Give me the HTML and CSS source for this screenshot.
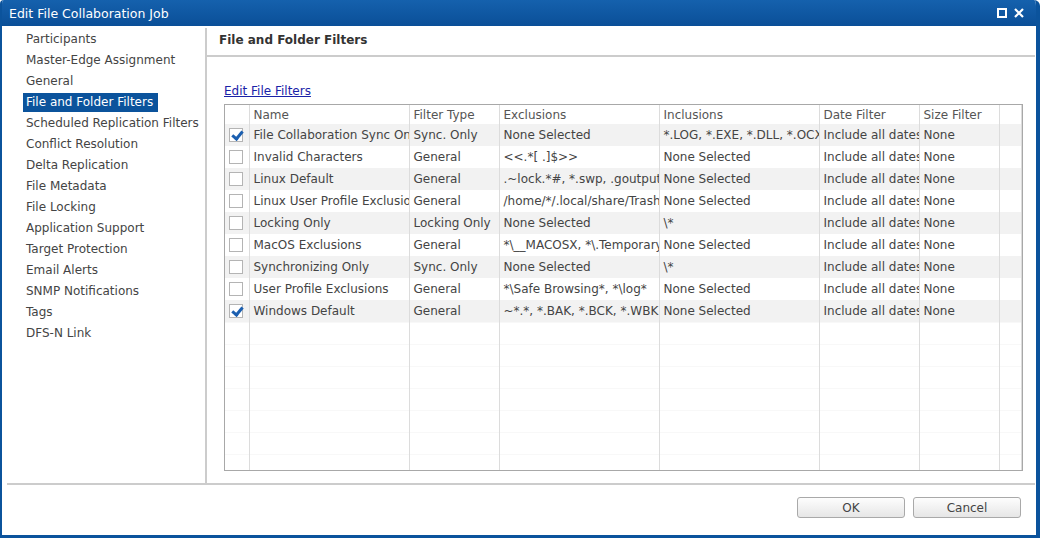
FILE: index.html
```html
<!DOCTYPE html>
<html lang="en">
<head>
    <meta charset="UTF-8">
    <title>Edit File Collaboration Job</title>
    <link rel="stylesheet" href="styles.css">
</head>
<body>
    <div class="dialog">
        <div class="titlebar">
            <span class="title">Edit File Collaboration Job</span>
            <span class="tools">
                <svg width="10" height="10" viewBox="0 0 10 10"><rect x="1" y="1" width="8" height="8" fill="none" stroke="#fff" stroke-width="2"/></svg>
                <svg width="10" height="10" viewBox="0 0 10 10"><path d="M1 1 L9 9 M9 1 L1 9" stroke="#fff" stroke-width="2.2"/></svg>
            </span>
        </div>
        <div class="main">
            <ul class="nav">
                <li>Participants</li>
                <li>Master-Edge Assignment</li>
                <li>General</li>
                <li class="active"><span>File and Folder Filters</span></li>
                <li>Scheduled Replication Filters</li>
                <li>Conflict Resolution</li>
                <li>Delta Replication</li>
                <li>File Metadata</li>
                <li>File Locking</li>
                <li>Application Support</li>
                <li>Target Protection</li>
                <li>Email Alerts</li>
                <li>SNMP Notifications</li>
                <li>Tags</li>
                <li>DFS-N Link</li>
            </ul>
            <div class="panel">
                <div class="panel-head">File and Folder Filters</div>
                <div class="panel-body">
                    <a class="edit-link" href="#">Edit File Filters</a>
                    <div class="grid">
                        <table>
                            <colgroup>
                                <col style="width:24px"><col style="width:160px"><col style="width:90px"><col style="width:160px"><col style="width:160px"><col style="width:100px"><col style="width:80px"><col>
                            </colgroup>
                            <thead>
                                <tr><th></th><th>Name</th><th>Filter Type</th><th>Exclusions</th><th>Inclusions</th><th>Date Filter</th><th>Size Filter</th><th></th></tr>
                            </thead>
                            <tbody>
                                <tr><td><span class="cb on"></span></td><td>File Collaboration Sync Only</td><td>Sync. Only</td><td>None Selected</td><td>*.LOG, *.EXE, *.DLL, *.OCX</td><td>Include all dates</td><td>None</td><td></td></tr>
                                <tr><td><span class="cb"></span></td><td>Invalid Characters</td><td>General</td><td>&lt;&lt;.*[ .]$&gt;&gt;</td><td>None Selected</td><td>Include all dates</td><td>None</td><td></td></tr>
                                <tr><td><span class="cb"></span></td><td>Linux Default</td><td>General</td><td>.~lock.*#, *.swp, .goutputstream</td><td>None Selected</td><td>Include all dates</td><td>None</td><td></td></tr>
                                <tr><td><span class="cb"></span></td><td>Linux User Profile Exclusions</td><td>General</td><td>/home/*/.local/share/Trash</td><td>None Selected</td><td>Include all dates</td><td>None</td><td></td></tr>
                                <tr><td><span class="cb"></span></td><td>Locking Only</td><td>Locking Only</td><td>None Selected</td><td>\*</td><td>Include all dates</td><td>None</td><td></td></tr>
                                <tr><td><span class="cb"></span></td><td>MacOS Exclusions</td><td>General</td><td>*\__MACOSX, *\.Temporary</td><td>None Selected</td><td>Include all dates</td><td>None</td><td></td></tr>
                                <tr><td><span class="cb"></span></td><td>Synchronizing Only</td><td>Sync. Only</td><td>None Selected</td><td>\*</td><td>Include all dates</td><td>None</td><td></td></tr>
                                <tr><td><span class="cb"></span></td><td>User Profile Exclusions</td><td>General</td><td>*\Safe Browsing*, *\log*</td><td>None Selected</td><td>Include all dates</td><td>None</td><td></td></tr>
                                <tr><td><span class="cb on"></span></td><td>Windows Default</td><td>General</td><td>~*.*, *.BAK, *.BCK, *.WBK</td><td>None Selected</td><td>Include all dates</td><td>None</td><td></td></tr>
                                <tr class="empty"><td></td><td></td><td></td><td></td><td></td><td></td><td></td><td></td></tr>
                                <tr class="empty"><td></td><td></td><td></td><td></td><td></td><td></td><td></td><td></td></tr>
                                <tr class="empty"><td></td><td></td><td></td><td></td><td></td><td></td><td></td><td></td></tr>
                                <tr class="empty"><td></td><td></td><td></td><td></td><td></td><td></td><td></td><td></td></tr>
                                <tr class="empty"><td></td><td></td><td></td><td></td><td></td><td></td><td></td><td></td></tr>
                                <tr class="empty"><td></td><td></td><td></td><td></td><td></td><td></td><td></td><td></td></tr>
                                <tr class="empty"><td></td><td></td><td></td><td></td><td></td><td></td><td></td><td></td></tr>
                            </tbody>
                        </table>
                    </div>
                </div>
            </div>
        </div>
        <div class="footer">
            <button class="btn">OK</button>
            <button class="btn">Cancel</button>
        </div>
    </div>
</body>
</html>
```

FILE: styles.css
```css
*{
    box-sizing: border-box;
}
body{
    margin: 0;
    font-family: "DejaVu Sans", Verdana, sans-serif;
    font-size: 12px;
    color: #444;
}
.dialog{
    width: 1040px;
    height: 538px;
    background: #fff;
    border: solid #0b539c;
    border-width: 0 4px 3px 2px;
    border-radius: 4px 6px 0 0;
    display: flex;
    flex-direction: column;
    overflow: hidden;
}
.titlebar{
    height: 26px;
    background: linear-gradient(#1561ad, #0a4f98);
    color: #fff;
    display: flex;
    align-items: center;
    justify-content: space-between;
    padding: 0 12px 0 7px;
    font-size: 12.5px;
}
.tools{
    display: flex;
    gap: 7px;
}
.tools svg{
    display: block;
}
.main{
    height: 457px;
    margin: 2px 1px 0 5px;
    border-bottom: 2px solid #ccc;
    display: flex;
}
.nav{
    list-style: none;
    margin: 0;
    padding: 1px 0 0 16px;
    width: 200px;
    border-right: 2px solid #ccc;
}
.nav li{
    height: 21px;
    line-height: 21px;
    padding-left: 3px;
    white-space: nowrap;
}
.nav li.active{
    padding-left: 0;
}
.nav li.active span{
    display: inline-block;
    background: #0b539c;
    color: #fff;
    line-height: 19px;
    padding: 0 5px 0 3px;
    margin-top: 1px;
}
.panel{
    flex: 1;
    display: flex;
    flex-direction: column;
}
.panel-head{
    height: 29px;
    border-bottom: 2px solid #ccc;
    font-weight: bold;
    padding: 3px 0 0 12px;
    line-height: 18px;
    color: #333;
}
.panel-body{
    padding: 26px 10px 0 17px;
}
.edit-link{
    display: block;
    color: #1a22a8;
    line-height: 16px;
    margin-bottom: 5px;
}
.grid{
    width: 799px;
    height: 367px;
    border: 1px solid #a8a8a8;
    overflow: hidden;
}
table{
    width: 100%;
    table-layout: fixed;
    border-collapse: collapse;
}
th, td{
    text-align: left;
    font-weight: normal;
    padding: 0 0 0 4px;
    white-space: nowrap;
    overflow: hidden;
    border-right: 1px solid #dcdcdc;
    color: #444;
}
th{
    height: 18px;
    line-height: 18px;
    padding-top: 1px;
    color: #555;
}
td{
    height: 22px;
}
tbody tr:nth-child(odd){
    background: #f2f2f2;
}
tbody tr.empty{
    background: #fff;
    border-top: 1px solid #f8f8f8;
}
.cb{
    display: block;
    width: 14px;
    height: 14px;
    border: 1px solid #b4b4b4;
    background: #fff;
    position: relative;
}
.cb.on::after{
    content: "";
    position: absolute;
    left: 4px;
    top: 0px;
    width: 4px;
    height: 8px;
    border: solid #1b5fb0;
    border-width: 0 3px 3px 0;
    transform: rotate(40deg);
}
.footer{
    flex: 1;
    display: flex;
    justify-content: flex-end;
    align-items: flex-start;
    gap: 8px;
    padding: 12px 15px 0 0;
}
.btn{
    width: 108px;
    height: 21px;
    border: 1px solid #a9a9a9;
    border-radius: 3px;
    background: linear-gradient(#fdfdfd, #e6e6e6);
    font-family: "DejaVu Sans", Verdana, sans-serif;
    font-size: 12px;
    color: #444;
    padding: 0;
}
```
